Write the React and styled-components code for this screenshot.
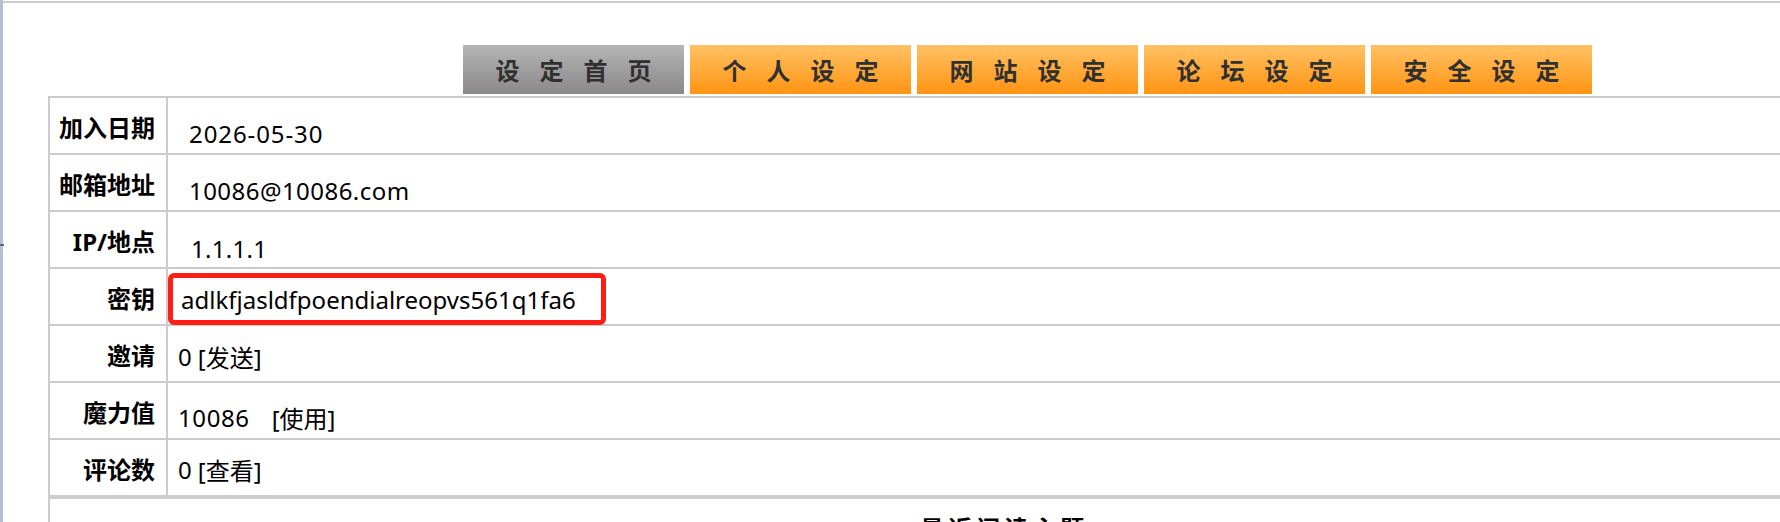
import React from 'react';
import styled, { createGlobalStyle } from 'styled-components';

const GlobalStyle = createGlobalStyle`
    html, body {
        margin: 0;
        padding: 0;
        background: #fff;
        overflow: hidden;
    }
    body {
        font-family: "Noto Sans", "Noto Sans CJK SC", sans-serif;
        color: #000;
    }
`;

const Frame = styled.div`
    position: relative;
    min-height: 100vh;
    padding-top: 1px;
    border-left: 3px solid #b3bfd3;
    box-sizing: border-box;
`;

// little resize grip sitting on the left edge
const Grip = styled.span`
    position: absolute;
    left: -3px;
    top: 244px;
    width: 4px;
    height: 2px;
    background: #6b6b6b;
`;

const Inner = styled.div`
    border-top: 2px solid #cdcdcd;
    padding-left: 45px;
`;

const Content = styled.div`
    width: 1910px;
`;

const TabBar = styled.div`
    display: flex;
    gap: 6px;
    padding: 42px 0 2px 415px;
`;

const Tab = styled.div`
    width: 221px;
    height: 49px;
    box-sizing: border-box;
    padding-left: 20px;
    text-align: center;
    line-height: 49px;
    font-family: "Noto Sans CJK SC", sans-serif;
    font-size: 24px;
    font-weight: 700;
    letter-spacing: 20px;
    color: #303030;
    background: ${p => p.active
        ? 'linear-gradient(to bottom, #b5b5b5, #8a8888)'
        : 'linear-gradient(to bottom, #ffc164, #ff9412)'};
`;

const InfoTable = styled.div`
    border-top: 2px solid #cccccc;
    border-left: 2px solid #cccccc;
`;

const Row = styled.div`
    display: grid;
    grid-template-columns: 118px 1fr;
    height: 57px;
    box-sizing: border-box;
    border-bottom: 2px solid #cccccc;
`;

const Label = styled.div`
    display: flex;
    align-items: center;
    justify-content: flex-end;
    padding: 2px 11px 0 0;
    border-right: 2px solid #cccccc;
    font-size: 24px;
    font-weight: 700;
    white-space: nowrap;
`;

const Value = styled.div`
    position: relative;
    display: flex;
    align-items: center;
    padding-left: ${p => p.indent || 10}px;
    padding-top: ${p => p.drop || 2}px;
    font-size: 24px;
    letter-spacing: ${p => p.spacing || 0}px;
    white-space: nowrap;
`;

const Action = styled.span`
    margin-left: ${p => p.gap || 6}px;
    letter-spacing: 0;
`;

const Highlight = styled.span`
    position: absolute;
    left: 0;
    top: 4px;
    width: 438px;
    height: 52px;
    box-sizing: border-box;
    border: 5px solid #ff1e14;
    border-radius: 6px;
    pointer-events: none;
`;

const Section = styled.div`
    border-top: 2px solid #cccccc;
    border-left: 2px solid #cccccc;
    padding-top: 11px;
`;

const SectionTitle = styled.div`
    text-align: center;
    font-size: 24px;
    font-weight: 700;
    letter-spacing: 4px;
`;

const tabs = ['设定首页', '个人设定', '网站设定', '论坛设定', '安全设定'];

function App() {
    return (
        <>
            <GlobalStyle />
            <Frame>
                <Grip />
                <Inner>
                    <Content>
                        <TabBar>
                            {tabs.map((t, i) => (
                                <Tab key={t} active={i === 0}>{t}</Tab>
                            ))}
                        </TabBar>

                        <InfoTable>
                            <Row>
                                <Label>加入日期</Label>
                                <Value indent={21} drop={16} spacing={0.9}>2026-05-30</Value>
                            </Row>
                            <Row>
                                <Label>邮箱地址</Label>
                                <Value indent={21} drop={16} spacing={0.45}>10086@10086.com</Value>
                            </Row>
                            <Row>
                                <Label>IP/地点</Label>
                                <Value indent={23} drop={18} spacing={0.3}>1.1.1.1</Value>
                            </Row>
                            <Row>
                                <Label>密钥</Label>
                                <Value indent={13} drop={6}>
                                    adlkfjasldfpoendialreopvs561q1fa6
                                    <Highlight />
                                </Value>
                            </Row>
                            <Row>
                                <Label>邀请</Label>
                                <Value drop={6}>0<Action>[发送]</Action></Value>
                            </Row>
                            <Row>
                                <Label>魔力值</Label>
                                <Value drop={14} spacing={0.6}>10086<Action gap={22}>[使用]</Action></Value>
                            </Row>
                            <Row>
                                <Label>评论数</Label>
                                <Value drop={4}>0<Action>[查看]</Action></Value>
                            </Row>
                        </InfoTable>

                        <Section>
                            <SectionTitle>最近阅读主题</SectionTitle>
                        </Section>
                    </Content>
                </Inner>
            </Frame>
        </>
    );
}

export default App;
